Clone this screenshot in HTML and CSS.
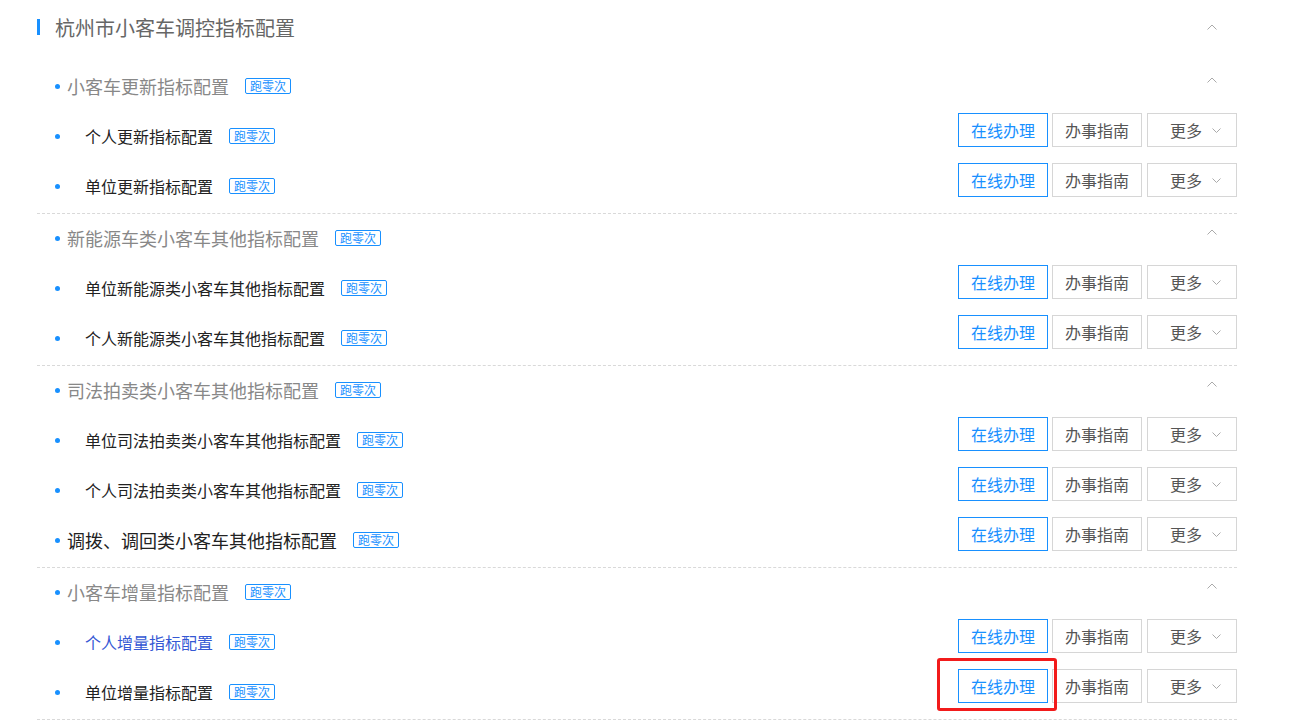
FILE: index.html
```html
<!DOCTYPE html>
<html lang="zh-CN">
<head>
    <meta charset="UTF-8">
    <meta name="viewport" content="width=device-width, initial-scale=1.0">
    <title>杭州市小客车调控指标配置</title>
    <link rel="stylesheet" href="styles.css">
</head>
<body>
<div class="container">
    <div class="title-row">
        <span class="title-bar"></span>
        <h1 class="title">杭州市小客车调控指标配置</h1>
        <svg class="chevron-up" width="10" height="6" viewBox="0 0 10 6"><polyline points="0.5,5.5 5,1 9.5,5.5" fill="none" stroke="#aaa" stroke-width="1"/></svg>
    </div>

    <div class="group">
        <div class="group-head">
            <span class="dot"></span>
            <span class="group-name">小客车更新指标配置</span>
            <span class="tag">跑零次</span>
            <svg class="chevron-up" width="10" height="6" viewBox="0 0 10 6"><polyline points="0.5,5.5 5,1 9.5,5.5" fill="none" stroke="#aaa" stroke-width="1"/></svg>
        </div>
        <div class="item">
            <span class="dot"></span>
            <span class="item-name">个人更新指标配置</span>
            <span class="tag">跑零次</span>
            <div class="actions">
                <a class="btn btn-online">在线办理</a>
                <a class="btn">办事指南</a>
                <a class="btn btn-more">更多<svg width="9" height="5" viewBox="0 0 9 5"><polyline points="0.5,0.5 4.5,4.5 8.5,0.5" fill="none" stroke="#aaa" stroke-width="1"/></svg></a>
            </div>
        </div>
        <div class="item">
            <span class="dot"></span>
            <span class="item-name">单位更新指标配置</span>
            <span class="tag">跑零次</span>
            <div class="actions">
                <a class="btn btn-online">在线办理</a>
                <a class="btn">办事指南</a>
                <a class="btn btn-more">更多<svg width="9" height="5" viewBox="0 0 9 5"><polyline points="0.5,0.5 4.5,4.5 8.5,0.5" fill="none" stroke="#aaa" stroke-width="1"/></svg></a>
            </div>
        </div>
    </div>

    <div class="group">
        <div class="group-head">
            <span class="dot"></span>
            <span class="group-name">新能源车类小客车其他指标配置</span>
            <span class="tag">跑零次</span>
            <svg class="chevron-up" width="10" height="6" viewBox="0 0 10 6"><polyline points="0.5,5.5 5,1 9.5,5.5" fill="none" stroke="#aaa" stroke-width="1"/></svg>
        </div>
        <div class="item">
            <span class="dot"></span>
            <span class="item-name">单位新能源类小客车其他指标配置</span>
            <span class="tag">跑零次</span>
            <div class="actions">
                <a class="btn btn-online">在线办理</a>
                <a class="btn">办事指南</a>
                <a class="btn btn-more">更多<svg width="9" height="5" viewBox="0 0 9 5"><polyline points="0.5,0.5 4.5,4.5 8.5,0.5" fill="none" stroke="#aaa" stroke-width="1"/></svg></a>
            </div>
        </div>
        <div class="item">
            <span class="dot"></span>
            <span class="item-name">个人新能源类小客车其他指标配置</span>
            <span class="tag">跑零次</span>
            <div class="actions">
                <a class="btn btn-online">在线办理</a>
                <a class="btn">办事指南</a>
                <a class="btn btn-more">更多<svg width="9" height="5" viewBox="0 0 9 5"><polyline points="0.5,0.5 4.5,4.5 8.5,0.5" fill="none" stroke="#aaa" stroke-width="1"/></svg></a>
            </div>
        </div>
    </div>

    <div class="group">
        <div class="group-head">
            <span class="dot"></span>
            <span class="group-name">司法拍卖类小客车其他指标配置</span>
            <span class="tag">跑零次</span>
            <svg class="chevron-up" width="10" height="6" viewBox="0 0 10 6"><polyline points="0.5,5.5 5,1 9.5,5.5" fill="none" stroke="#aaa" stroke-width="1"/></svg>
        </div>
        <div class="item">
            <span class="dot"></span>
            <span class="item-name">单位司法拍卖类小客车其他指标配置</span>
            <span class="tag">跑零次</span>
            <div class="actions">
                <a class="btn btn-online">在线办理</a>
                <a class="btn">办事指南</a>
                <a class="btn btn-more">更多<svg width="9" height="5" viewBox="0 0 9 5"><polyline points="0.5,0.5 4.5,4.5 8.5,0.5" fill="none" stroke="#aaa" stroke-width="1"/></svg></a>
            </div>
        </div>
        <div class="item">
            <span class="dot"></span>
            <span class="item-name">个人司法拍卖类小客车其他指标配置</span>
            <span class="tag">跑零次</span>
            <div class="actions">
                <a class="btn btn-online">在线办理</a>
                <a class="btn">办事指南</a>
                <a class="btn btn-more">更多<svg width="9" height="5" viewBox="0 0 9 5"><polyline points="0.5,0.5 4.5,4.5 8.5,0.5" fill="none" stroke="#aaa" stroke-width="1"/></svg></a>
            </div>
        </div>
        <div class="item item-single">
            <span class="dot"></span>
            <span class="item-name">调拨、调回类小客车其他指标配置</span>
            <span class="tag">跑零次</span>
            <div class="actions">
                <a class="btn btn-online">在线办理</a>
                <a class="btn">办事指南</a>
                <a class="btn btn-more">更多<svg width="9" height="5" viewBox="0 0 9 5"><polyline points="0.5,0.5 4.5,4.5 8.5,0.5" fill="none" stroke="#aaa" stroke-width="1"/></svg></a>
            </div>
        </div>
    </div>

    <div class="group">
        <div class="group-head">
            <span class="dot"></span>
            <span class="group-name">小客车增量指标配置</span>
            <span class="tag">跑零次</span>
            <svg class="chevron-up" width="10" height="6" viewBox="0 0 10 6"><polyline points="0.5,5.5 5,1 9.5,5.5" fill="none" stroke="#aaa" stroke-width="1"/></svg>
        </div>
        <div class="item">
            <span class="dot"></span>
            <span class="item-name item-link">个人增量指标配置</span>
            <span class="tag">跑零次</span>
            <div class="actions">
                <a class="btn btn-online">在线办理</a>
                <a class="btn">办事指南</a>
                <a class="btn btn-more">更多<svg width="9" height="5" viewBox="0 0 9 5"><polyline points="0.5,0.5 4.5,4.5 8.5,0.5" fill="none" stroke="#aaa" stroke-width="1"/></svg></a>
            </div>
        </div>
        <div class="item">
            <span class="dot"></span>
            <span class="item-name">单位增量指标配置</span>
            <span class="tag">跑零次</span>
            <div class="actions">
                <a class="btn btn-online is-marked">在线办理</a>
                <a class="btn">办事指南</a>
                <a class="btn btn-more">更多<svg width="9" height="5" viewBox="0 0 9 5"><polyline points="0.5,0.5 4.5,4.5 8.5,0.5" fill="none" stroke="#aaa" stroke-width="1"/></svg></a>
            </div>
        </div>
    </div>
</div>
</body>
</html>
```

FILE: styles.css
```css
html {
    overflow: hidden;
}

body {
    margin: 0;
    padding: 0;
    background-color: #fff;
    font-family: "Microsoft YaHei", "Noto Sans CJK SC", "Noto Sans", sans-serif;
    color: #333;
}

.container {
    width: 1200px;
    margin-left: 37px;
}

.title-row {
    height: 56px;
    margin-bottom: 6px;
    display: flex;
    align-items: center;
}

.title-bar {
    width: 3px;
    height: 16px;
    background-color: #1890ff;
    margin-right: 15px;
    margin-top: -2px;
}

.title {
    margin: 0;
    font-size: 20px;
    font-weight: normal;
    line-height: 24px;
    color: #666;
}

.chevron-up {
    margin-left: auto;
    margin-right: 20px;
}

.title-row .chevron-up {
    margin-top: -3px;
}

.group {
    padding: 5px 0 8px;
    border-bottom: 1px dashed #d9d9d9;
}

.group-head {
    height: 38px;
    display: flex;
    align-items: center;
    padding-left: 18px;
}

.group-head .chevron-up {
    align-self: flex-start;
    margin-top: 10px;
}

.dot {
    width: 5px;
    height: 5px;
    border-radius: 50%;
    background-color: #1890ff;
    flex-shrink: 0;
}

.group-name {
    margin-left: 7px;
    font-size: 18px;
    line-height: 22px;
    color: #888;
}

.tag {
    margin-left: 16px;
    padding: 0 4px;
    border: 1px solid #1890ff;
    border-radius: 2px;
    font-size: 12px;
    line-height: 14px;
    color: #1890ff;
}

.item {
    height: 50px;
    display: flex;
    align-items: center;
    padding-left: 18px;
}

/* label sits a little lower than the buttons */
.item .dot,
.item .item-name,
.item .tag {
    margin-top: 12px;
}

.item-name {
    margin-left: 25px;
    font-size: 16px;
    line-height: 20px;
    color: #222;
}

.item-link {
    color: #3558d4;
}

.item-single .item-name {
    margin-left: 7px;
    font-size: 18px;
    line-height: 22px;
}

.actions {
    margin-left: auto;
    display: flex;
}

.btn {
    box-sizing: border-box;
    width: 90px;
    height: 34px;
    border: 1px solid #d6d6d6;
    display: flex;
    align-items: center;
    justify-content: center;
    font-size: 16px;
    color: #555;
    cursor: pointer;
}

.btn + .btn {
    margin-left: 4px;
}

.btn-online {
    border-color: #1890ff;
    color: #1890ff;
    position: relative;
}

.btn-more {
    justify-content: flex-start;
    padding-left: 22px;
    gap: 10px;
}

.btn.btn-more {
    margin-left: 5px;
}

.is-marked::after {
    content: '';
    position: absolute;
    top: -12px;
    left: -22px;
    right: -10px;
    bottom: -9px;
    border: 3px solid #f21b1b;
    border-radius: 3px;
}
```
